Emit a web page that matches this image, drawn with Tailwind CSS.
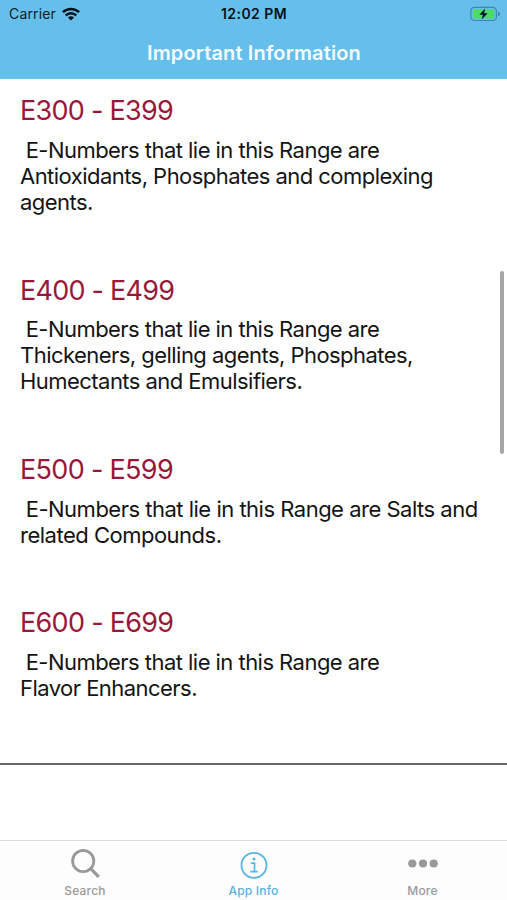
<!DOCTYPE html>
<html lang="en">
<head>
    <meta charset="UTF-8">
    <meta name="viewport" content="width=device-width, initial-scale=1.0">
    <title>Important Information</title>
    <script src="https://cdn.jsdelivr.net/npm/@tailwindcss/browser@4"></script>
</head>
<body class="relative flex flex-col h-screen overflow-hidden bg-white font-['Inter','Liberation_Sans',sans-serif]">
    <header class="h-[79px] shrink-0 bg-[#65bfea]">
        <!-- Status bar -->
        <div class="grid grid-cols-3 items-center h-[27px] pl-[9px] pr-[6px] text-[14px] text-[#10202a]">
            <div class="flex items-center gap-[6px]">
                <span class="tracking-[0.15px]">Carrier</span>
                <svg class="w-[18px] h-[14px]" viewBox="0 0 18 14" fill="none" stroke="#06121a" stroke-width="2.5">
                    <path d="M0.9 5.2a11.6 11.6 0 0 1 16.2 0"/>
                    <path d="M3.7 8.3a7.6 7.6 0 0 1 10.6 0"/>
                    <path d="M9 13.6L5.9 10.5a4.4 4.4 0 0 1 6.2 0z" fill="#06121a" stroke="none"/>
                </svg>
            </div>
            <span class="pr-[2px] text-center font-semibold tracking-[0.45px] text-[#06121a]">12:02 PM</span>
            <svg class="justify-self-end w-[31px] h-[16px]" viewBox="0 0 31 16">
                <rect x="0.8" y="1.3" width="25.6" height="13.2" rx="3.6" fill="none" stroke="#3f87a8" stroke-width="1.2"/>
                <rect x="2.8" y="3.2" width="21.4" height="9.4" rx="2" fill="#4cdc64"/>
                <path d="M28 5.6q2.2 1 2.2 2.4t-2.2 2.4z" fill="#3f87a8"/>
                <path d="M15.2 2.6L9.4 8.8h3.5l-1.2 4.8 6-6.4h-3.6z" fill="#06121a" stroke="#65bfea" stroke-width="0.8" paint-order="stroke"/>
            </svg>
        </div>
        <h1 class="h-[52px] pl-px leading-[52px] text-center text-[20px] font-semibold tracking-[0.14px] text-[#f4fbff]">Important Information</h1>
    </header>

    <main class="flex-1 text-[22px] leading-[26.2px] tracking-[-0.54px] text-[#141414]">
        <div class="flex flex-col pl-[20px] pt-[16px] h-[686px] border-b-2 border-[#666]">
            <section class="h-[179.7px] shrink-0">
                <h2 class="mb-[9.5px] text-[27px] leading-[32px] tracking-[-0.72px] text-[#99183a]">E300 - E399</h2>
                <p class="whitespace-pre"> E-Numbers that lie in this Range are<br>Antioxidants, Phosphates and complexing<br>agents.</p>
            </section>
            <section class="h-[179.7px] shrink-0">
                <h2 class="mb-[9px] text-[27px] leading-[32px] tracking-[-0.75px] text-[#99183a]">E400 - E499</h2>
                <p class="whitespace-pre"> E-Numbers that lie in this Range are<br>Thickeners, gelling agents, Phosphates,<br>Humectants and Emulsifiers.</p>
            </section>
            <section class="h-[153px] shrink-0">
                <h2 class="mb-[9.5px] text-[27px] leading-[32px] tracking-[-0.68px] text-[#99183a]">E500 - E599</h2>
                <p class="whitespace-pre tracking-[-0.5px]"> E-Numbers that lie in this Range are Salts and<br>related Compounds.</p>
            </section>
            <section>
                <h2 class="mb-[9.5px] text-[27px] leading-[32px] tracking-[-0.7px] text-[#99183a]">E600 - E699</h2>
                <p class="whitespace-pre"> E-Numbers that lie in this Range are<br>Flavor Enhancers.</p>
            </section>
        </div>
    </main>

    <!-- Scroll indicator -->
    <div class="absolute right-[3px] top-[271px] w-[4px] h-[183px] rounded-full bg-[#a5a5a5]"></div>

    <!-- Tab bar -->
    <nav class="grid grid-cols-3 h-[60px] shrink-0 border-t border-[#dedede] bg-[#fdfdfd] text-[12px] leading-[14px] font-medium text-[#999]">
        <a class="flex flex-col items-center justify-between pt-[7px] pb-[2px]">
            <svg class="w-[30px] h-[32px]" viewBox="0 0 30 32" fill="none" stroke="#999">
                <circle cx="13.2" cy="13" r="10.6" stroke-width="2.8"/>
                <path d="M20.5 20.4l8.2 8.4" stroke-width="3.2"/>
            </svg>
            <span class="pl-px tracking-[0.2px]">Search</span>
        </a>
        <a class="flex flex-col items-center justify-between pt-[10px] pb-[2px] text-[#54b4e2]">
            <svg class="w-[28px] h-[28px]" viewBox="0 0 28 28" fill="none" stroke="#54b4e2">
                <circle cx="14" cy="14.3" r="12.5" stroke-width="1.8"/>
                <path d="M10.8 12.1h3.7v8.6M10.3 20.7h7.4" stroke-width="1.7"/>
                <circle cx="14" cy="8" r="1.6" fill="#54b4e2" stroke="none"/>
            </svg>
            <span class="tracking-[0.2px]">App Info</span>
        </a>
        <a class="flex flex-col items-center justify-between pt-[18px] pb-[2px]">
            <svg class="w-[30px] h-[9px]" viewBox="0 0 30 9" fill="#999">
                <circle cx="4.3" cy="4.5" r="4.1"/>
                <circle cx="15" cy="4.5" r="4.1"/>
                <circle cx="25.7" cy="4.5" r="4.1"/>
            </svg>
            <span class="tracking-[0.2px]">More</span>
        </a>
    </nav>
</body>
</html>
